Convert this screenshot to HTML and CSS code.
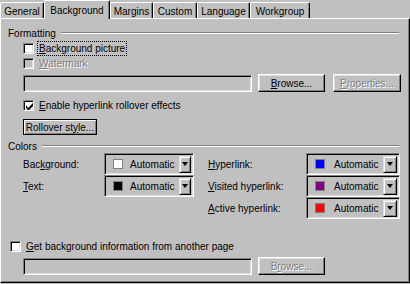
FILE: index.html
```html
<!DOCTYPE html>
<html lang="en">
<head>
  <meta charset="UTF-8">
  <title>Page Properties - Background</title>
  <link rel="stylesheet" href="styles.css">
</head>
<body>
  <div class="dialog">
    <div class="tabs">
      <div class="tab w-general">General</div>
      <div class="tab active w-background">Background</div>
      <div class="tab w-margins">Margins</div>
      <div class="tab w-custom">Custom</div>
      <div class="tab w-language">Language</div>
      <div class="tab w-workgroup">Workgroup</div>
    </div>

    <div class="panel">
      <!-- Formatting group -->
      <div class="group-title"><span>Formatting</span><div class="groove"></div></div>

      <div class="check-row row-first">
        <span class="checkbox"></span>
        <span class="label focused"><u>B</u>ackground picture</span>
      </div>
      <div class="check-row row-second">
        <span class="checkbox disabled"></span>
        <span class="label dim"><u>W</u>atermark</span>
      </div>

      <div class="field-row row-picture">
        <div class="field w-field"></div>
        <button class="btn w-browse"><u>B</u>rowse...</button>
        <button class="btn w-props dim"><u>P</u>roperties...</button>
      </div>

      <div class="check-row row-enable">
        <span class="checkbox">
          <svg width="7" height="7" viewBox="0 0 7 7"><path d="M0 2v3l2 2h1l4-4V0L2 5z" fill="#000"/></svg>
        </span>
        <span class="label"><u>E</u>nable hyperlink rollover effects</span>
      </div>

      <button class="btn default w-rollover">Rollover st<u>y</u>le...</button>

      <!-- Colors group -->
      <div class="group-title colors-title"><span>Colors</span><div class="groove"></div></div>

      <div class="color-grid">
        <div class="color-col">
          <div class="color-row">
            <span class="color-label left">Bac<u>k</u>ground:</span>
            <div class="combo left">
              <span class="swatch" style="background:#ffffff"></span>
              <span class="combo-text">Automatic</span>
              <span class="drop"><i class="arrow"></i></span>
            </div>
          </div>
          <div class="color-row">
            <span class="color-label left"><u>T</u>ext:</span>
            <div class="combo left">
              <span class="swatch" style="background:#000000"></span>
              <span class="combo-text">Automatic</span>
              <span class="drop"><i class="arrow"></i></span>
            </div>
          </div>
        </div>
        <div class="color-col">
          <div class="color-row">
            <span class="color-label right"><u>H</u>yperlink:</span>
            <div class="combo right">
              <span class="swatch" style="background:#0000ff"></span>
              <span class="combo-text">Automatic</span>
              <span class="drop"><i class="arrow"></i></span>
            </div>
          </div>
          <div class="color-row">
            <span class="color-label right"><u>V</u>isited hyperlink:</span>
            <div class="combo right">
              <span class="swatch" style="background:#800080"></span>
              <span class="combo-text">Automatic</span>
              <span class="drop"><i class="arrow"></i></span>
            </div>
          </div>
          <div class="color-row">
            <span class="color-label right"><u>A</u>ctive hyperlink:</span>
            <div class="combo right">
              <span class="swatch" style="background:#ff0000"></span>
              <span class="combo-text">Automatic</span>
              <span class="drop"><i class="arrow"></i></span>
            </div>
          </div>
        </div>
      </div>

      <div class="check-row row-other">
        <span class="checkbox"></span>
        <span class="label"><u>G</u>et background information from another page</span>
      </div>

      <div class="field-row row-other-field">
        <div class="field w-field"></div>
        <button class="btn w-browse dim">B<u>r</u>owse...</button>
      </div>
    </div>
  </div>
</body>
</html>
```

FILE: styles.css
```css
:root {
  --face: #c0c0c0;
  --shadow: #808080;
  --light: #dfdfdf;
  --hilite: #ffffff;
  --dark: #000000;
}

* {
  box-sizing: border-box;
}

body {
  margin: 0;
  background-color: var(--face);
  font-family: 'Liberation Sans', Arial, sans-serif;
  font-size: 10px;
  color: #000;
  line-height: 13px;
}

u {
  text-decoration: underline;
  text-underline-offset: 1px;
}

.dialog {
  width: 410px;
  height: 284px;
}

/* Tabs */
.tabs {
  display: flex;
  align-items: flex-end;
  height: 18px;
}

.tab {
  height: 16px;
  padding-top: 2px;
  text-align: center;
  border-top: 1px solid var(--hilite);
  border-left: 1px solid var(--hilite);
  border-right: 1px solid var(--dark);
  border-radius: 2px 2px 0 0;
  box-shadow: inset -1px 0 var(--shadow);
}

.tab.active {
  height: 19px;
  margin-bottom: -1px;
  padding-top: 3px;
  background-color: var(--face);
  position: relative;
  z-index: 1;
}

.w-general { width: 44px; }
.w-background { width: 66px; }
.w-margins { width: 43px; }
.w-custom { width: 44px; }
.w-language { width: 53px; }
.w-workgroup { width: 60px; }

/* Panel */
.panel {
  height: 265px;
  padding: 8px 0 0 7px;
  border-top: 1px solid var(--hilite);
  border-left: 1px solid var(--hilite);
  border-right: 1px solid var(--dark);
  border-bottom: 1px solid var(--dark);
  box-shadow: inset -1px -1px var(--shadow);
}

.group-title {
  display: flex;
  align-items: center;
  height: 13px;
  padding-right: 10px;
}

.groove {
  flex: 1;
  height: 2px;
  margin-left: 5px;
  margin-top: -2px;
  border-top: 1px solid var(--shadow);
  border-bottom: 1px solid var(--hilite);
}

.colors-title {
  margin-top: 5px;
}

/* Checkboxes */
.check-row {
  display: flex;
  align-items: center;
  height: 13px;
  margin-left: 15px;
}

.row-first { margin-top: 2px; }
.row-second { margin-top: 2px; }
.row-enable { margin-top: 7px; }
.row-other { margin-top: 21px; margin-left: 2px; }

.checkbox {
  width: 11px;
  height: 11px;
  display: flex;
  align-items: center;
  justify-content: center;
  background-color: #fff;
  border: 1px solid;
  border-color: var(--shadow) var(--hilite) var(--hilite) var(--shadow);
  box-shadow: inset 1px 1px var(--dark), inset -1px -1px var(--light);
}

.checkbox svg {
  margin: 1px 0 0 1px;
}

.checkbox.disabled {
  background-color: var(--face);
}

.label {
  margin-left: 5px;
  white-space: nowrap;
}

.label.focused {
  margin-left: 4px;
  padding: 0 1px;
  outline: 1px dotted #000;
  outline-offset: 0;
  line-height: 13px;
}

.dim {
  color: var(--shadow);
  text-shadow: 1px 1px 0 var(--hilite);
}

/* Text field + buttons rows */
.field-row {
  display: flex;
  align-items: flex-end;
  margin-left: 15px;
}

.row-picture { margin-top: 4px; }
.row-other-field { margin-top: 4px; }

.field {
  height: 17px;
  border: 1px solid;
  border-color: var(--shadow) var(--hilite) var(--hilite) var(--shadow);
  box-shadow: inset 1px 1px var(--dark), inset -1px -1px var(--light);
}

.w-field { width: 229px; }

.btn {
  height: 18px;
  padding: 0;
  margin-left: 6px;
  font: inherit;
  background-color: var(--face);
  border: 1px solid;
  border-color: var(--hilite) var(--dark) var(--dark) var(--hilite);
  box-shadow: inset -1px -1px var(--shadow), inset 1px 1px var(--light);
}

.w-browse { width: 67px; }
.w-props { width: 68px; margin-left: 8px; }

.btn.default {
  display: block;
  width: 74px;
  height: 16px;
  margin: 7px 0 0 15px;
  border-color: var(--dark);
  box-shadow: inset 1px 1px var(--hilite), inset -1px -1px var(--shadow);
}

/* Color pickers */
.color-grid {
  display: flex;
  margin-left: 15px;
}

.color-row {
  display: flex;
  align-items: center;
  height: 22px;
}

.color-label.left { width: 81px; }
.color-label.right { width: 98px; margin-left: 14px; }

.combo {
  height: 22px;
  display: flex;
  align-items: center;
  border: 1px solid;
  border-color: var(--shadow) var(--hilite) var(--hilite) var(--shadow);
  box-shadow: inset 1px 1px var(--dark), inset -1px -1px var(--light);
  padding: 2px 2px 2px 8px;
}

.combo.left { width: 90px; }
.combo.right { width: 94px; }

.swatch {
  width: 10px;
  height: 10px;
  border: 1px solid var(--shadow);
}

.combo-text {
  margin-left: 7px;
  flex: 1;
}

.combo.right .combo-text {
  margin-left: 9px;
}

.drop {
  width: 12px;
  height: 17px;
  display: flex;
  align-items: center;
  justify-content: center;
  border: 1px solid;
  border-color: var(--light) var(--dark) var(--dark) var(--light);
  box-shadow: inset 1px 1px var(--hilite), inset -1px -1px var(--shadow);
}

.combo.right .drop {
  width: 14px;
}

.arrow {
  width: 0;
  height: 0;
  border-left: 3px solid transparent;
  border-right: 3px solid transparent;
  border-top: 4px solid var(--dark);
}
```
